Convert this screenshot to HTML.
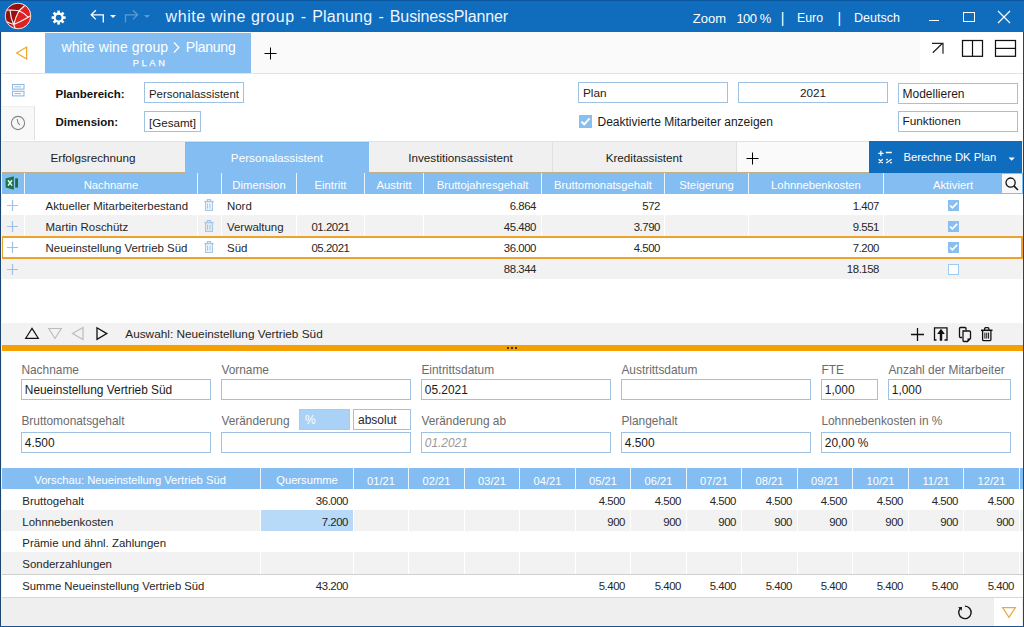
<!DOCTYPE html>
<html><head><meta charset="utf-8"><style>
*{margin:0;padding:0;box-sizing:border-box}
html,body{width:1024px;height:627px;overflow:hidden}
body{position:relative;font-family:"Liberation Sans",sans-serif;font-size:12px;color:#1b1b1b;background:#fff}
.a{position:absolute}
.t{position:absolute;white-space:nowrap}
</style></head><body>
<div class="a" style="left:0px;top:0px;width:1024px;height:32px;background:#106cbd"></div>
<div class="a" style="left:0px;top:0px;width:1024px;height:1px;background:#0a57a0"></div>
<svg class="a" style="left:4px;top:2px;" width="28" height="28" viewBox="0 0 28 28">
<defs><clipPath id="cc"><circle cx="14" cy="14" r="12.6"/></clipPath></defs>
<circle cx="14" cy="14" r="13" fill="#f3c9c9"/>
<g clip-path="url(#cc)">
<rect x="0" y="0" width="28" height="28" fill="#dd2222"/>
<path d="M0 0 H24 L22 2 Q18.5 6 15 8.7 Q11.5 15 9.8 22.5 L0 26 Z" fill="#961010"/>
<path d="M0.5 8.8 Q3 7.8 6 8 Q10 8.2 15 8.7 Q18.5 6 22 2 M6 8 Q6.5 16 9.8 22.5 Q11.5 15 15 8.7 Q20.5 11 24.3 15.3 Q17 19.5 9.8 22.5 Q6 21.5 2.5 19.5 M24.3 15.3 L27.5 13 M9.8 22.5 L11.5 27.5" stroke="#fff" stroke-width="1.15" fill="none" stroke-linejoin="round" opacity="0.95"/>
</g>
<circle cx="14" cy="14" r="12.8" stroke="#f6dede" stroke-width="0.9" fill="none"/>
</svg>
<svg class="a" style="left:50px;top:10px;" width="17" height="16" viewBox="0 0 17 16"><g transform="translate(8.6,7.6)" fill="#fff"><circle r="5"/><rect x="-1.3" y="-7" width="2.6" height="3" transform="rotate(0)"/><rect x="-1.3" y="-7" width="2.6" height="3" transform="rotate(45)"/><rect x="-1.3" y="-7" width="2.6" height="3" transform="rotate(90)"/><rect x="-1.3" y="-7" width="2.6" height="3" transform="rotate(135)"/><rect x="-1.3" y="-7" width="2.6" height="3" transform="rotate(180)"/><rect x="-1.3" y="-7" width="2.6" height="3" transform="rotate(225)"/><rect x="-1.3" y="-7" width="2.6" height="3" transform="rotate(270)"/><rect x="-1.3" y="-7" width="2.6" height="3" transform="rotate(315)"/><circle r="2.9" fill="#106cbd"/></g></svg>
<svg class="a" style="left:88px;top:8px;" width="64" height="18" viewBox="0 0 64 18">
<path d="M3.5 6.8 H15.3 V14.5 M7.8 2.2 L3.2 6.8 L7.8 11.4" stroke="#fff" stroke-width="1.3" fill="none"/>
<path d="M22 7 H28 L25 10 Z" fill="#fff"/>
<path d="M37.5 14.5 V6.8 H49.3 M45 2.2 L49.6 6.8 L45 11.4" stroke="#5d9ad6" stroke-width="1.3" fill="none"/>
<path d="M56 7 H62 L59 10 Z" fill="#5d9ad6"/>
</svg>
<div class="t" style="left:165.6px;top:9.46px;font-size:16px;line-height:16px;color:#eef6ff;text-align:left;letter-spacing:0.56px">white wine group</div>
<div class="t" style="left:300.8px;top:9.46px;font-size:16px;line-height:16px;color:#eef6ff;text-align:left;">-</div>
<div class="t" style="left:312.2px;top:9.46px;font-size:16px;line-height:16px;color:#eef6ff;text-align:left;letter-spacing:0.19px">Planung</div>
<div class="t" style="left:378.4px;top:9.46px;font-size:16px;line-height:16px;color:#eef6ff;text-align:left;">-</div>
<div class="t" style="left:389.8px;top:9.46px;font-size:16px;line-height:16px;color:#eef6ff;text-align:left;letter-spacing:-0.12px">BusinessPlanner</div>
<div class="t" style="left:692.8px;top:11.60px;font-size:13px;line-height:13px;color:#fff;text-align:left;">Zoom</div>
<div class="t" style="left:736.4px;top:11.60px;font-size:13px;line-height:13px;color:#fff;text-align:left;letter-spacing:-0.5px">100 %</div>
<div class="t" style="left:780.8px;top:11.35px;font-size:14px;line-height:14px;color:#fff;text-align:left;">|</div>
<div class="t" style="left:797px;top:12.19px;font-size:12.3px;line-height:12.3px;color:#fff;text-align:left;">Euro</div>
<div class="t" style="left:837.5px;top:11.35px;font-size:14px;line-height:14px;color:#fff;text-align:left;">|</div>
<div class="t" style="left:854px;top:12.02px;font-size:12.5px;line-height:12.5px;color:#fff;text-align:left;">Deutsch</div>
<div class="a" style="left:929px;top:19.5px;width:10px;height:1.2px;background:#fff"></div>
<div class="a" style="left:963px;top:11.5px;width:12px;height:10px;border:1.2px solid #fff"></div>
<svg class="a" style="left:997px;top:10px;" width="14" height="14" viewBox="0 0 14 14"><path d="M1 1 L13 13 M13 1 L1 13" stroke="#fff" stroke-width="1.2"/></svg>
<div class="a" style="left:1px;top:32px;width:1022px;height:41px;background:#fafafa"></div>
<div class="a" style="left:1px;top:32px;width:44px;height:41px;background:#fff"></div>
<div class="a" style="left:920px;top:32px;width:103px;height:41px;background:#fff"></div>
<div class="a" style="left:1px;top:73px;width:1022px;height:1px;background:#e3e3e3"></div>
<svg class="a" style="left:14px;top:45px;" width="16" height="16" viewBox="0 0 16 16"><path d="M2.6 8 L12.6 2 V14 Z" stroke="#eea52a" stroke-width="1.2" fill="none" stroke-linejoin="miter"/></svg>
<div class="a" style="left:45px;top:33px;width:206px;height:40px;background:#84bdf1"></div>
<div class="t" style="left:61.5px;top:40.15px;font-size:14px;line-height:14px;color:#fff;text-align:left;letter-spacing:0.1px">white wine group</div>
<svg class="a" style="left:172px;top:41px;" width="9" height="13" viewBox="0 0 9 13"><path d="M2 1.5 L6.8 6.5 L2 11.5" stroke="#fff" stroke-width="1.3" fill="none"/></svg>
<div class="t" style="left:185.8px;top:40.15px;font-size:14px;line-height:14px;color:#fff;text-align:left;letter-spacing:-0.25px">Planung</div>
<div class="t" style="left:132.8px;top:59.13px;font-size:9.3px;line-height:9.3px;color:#fafcff;text-align:left;letter-spacing:2.6px;-webkit-text-stroke:0.25px #fafcff">PLAN</div>
<svg class="a" style="left:264px;top:47px;" width="13" height="13" viewBox="0 0 13 13"><path d="M6.5 0.5 V12.5 M0.5 6.5 H12.5" stroke="#000" stroke-width="1"/></svg>
<svg class="a" style="left:930px;top:41px;" width="16" height="16" viewBox="0 0 16 16"><path d="M2 2.3 H13 V12.8 M2.8 11.8 L12 2.8" stroke="#222" stroke-width="1.2" fill="none"/></svg>
<svg class="a" style="left:961px;top:39px;" width="24" height="19" viewBox="0 0 24 19"><rect x="1.5" y="1.5" width="20" height="15.8" stroke="#111" stroke-width="1.25" fill="none"/><path d="M11.5 1.5 V17.3" stroke="#111" stroke-width="1.2"/></svg>
<svg class="a" style="left:994px;top:39px;" width="24" height="19" viewBox="0 0 24 19"><rect x="1.5" y="1.5" width="20" height="15.8" stroke="#111" stroke-width="1.25" fill="none"/><path d="M1.5 9.4 H21.5" stroke="#111" stroke-width="1.2"/></svg>
<div class="a" style="left:1px;top:74px;width:1022px;height:67px;background:#fff"></div>
<svg class="a" style="left:11px;top:83px;" width="14" height="14" viewBox="0 0 14 14"><rect x="1.5" y="1.5" width="11.5" height="4.6" stroke="#93b9e0" stroke-width="1.1" fill="none"/><rect x="1.5" y="8.3" width="11.5" height="4.6" stroke="#93b9e0" stroke-width="1.1" fill="none"/><path d="M3.5 3.8 H10 M3.5 10.6 H10" stroke="#93b9e0" stroke-width="1"/></svg>
<div class="a" style="left:1px;top:106px;width:34px;height:34px;background:#f8f8f8;border-right:1px solid #e0e0e0;border-top:1px solid #efefef"></div>
<svg class="a" style="left:10px;top:115px;" width="16" height="16" viewBox="0 0 16 16"><circle cx="8" cy="8" r="6.6" stroke="#858585" stroke-width="1.1" fill="none"/><path d="M7.2 4 L8 7.8 L9.8 9.8" stroke="#858585" stroke-width="1.1" fill="none"/></svg>
<div class="t" style="left:55.5px;top:88.87px;font-size:11.5px;line-height:11.5px;color:#111;text-align:left;font-weight:bold">Planbereich:</div>
<div class="t" style="left:55.5px;top:116.77px;font-size:11.5px;line-height:11.5px;color:#111;text-align:left;font-weight:bold">Dimension:</div>
<div class="a" style="left:144px;top:82px;width:100px;height:21px;background:#fff;border:1px solid #9fc1e2"></div>
<div class="t" style="left:149px;top:88.65px;font-size:11.4px;line-height:11.4px;color:#1b1b1b;text-align:left;">Personalassistent</div>
<div class="a" style="left:144px;top:111px;width:57px;height:21px;background:#fff;border:1px solid #9fc1e2"></div>
<div class="t" style="left:149px;top:116.88px;font-size:11.6px;line-height:11.6px;color:#1b1b1b;text-align:left;">[Gesamt]</div>
<div class="a" style="left:578px;top:82px;width:150px;height:21px;background:#fff;border:1px solid #9fc1e2"></div>
<div class="t" style="left:583px;top:88.31px;font-size:11.8px;line-height:11.8px;color:#1b1b1b;text-align:left;">Plan</div>
<div class="a" style="left:738px;top:82px;width:150px;height:21px;background:#fff;border:1px solid #9fc1e2"></div>
<div class="t" style="left:738px;top:88.31px;font-size:11.8px;line-height:11.8px;color:#1b1b1b;text-align:center;width:150px;">2021</div>
<div class="a" style="left:898px;top:83px;width:120px;height:21px;background:#fff;border:1px solid #9fc1e2"></div>
<div class="t" style="left:902.5px;top:87.94px;font-size:12px;line-height:12px;color:#1b1b1b;text-align:left;">Modellieren</div>
<div class="a" style="left:898px;top:111px;width:120px;height:21px;background:#fff;border:1px solid #9fc1e2"></div>
<div class="t" style="left:902.5px;top:115.91px;font-size:11.8px;line-height:11.8px;color:#1b1b1b;text-align:left;">Funktionen</div>
<div class="a" style="left:579px;top:115px;width:13px;height:13px;background:#88bef0"></div>
<svg class="a" style="left:579px;top:115px;" width="13" height="13" viewBox="0 0 13 13"><path d="M2.4 6.6 L5.2 9.3 L10.6 3.4" stroke="#fff" stroke-width="1.9" fill="none"/></svg>
<div class="t" style="left:597.5px;top:115.84px;font-size:12px;line-height:12px;color:#1b1b1b;text-align:left;">Deaktivierte Mitarbeiter anzeigen</div>
<div class="a" style="left:1px;top:141px;width:1022px;height:32px;background:#f0f0f0"></div>
<div class="a" style="left:1px;top:141px;width:1022px;height:1px;background:#e2e2e2"></div>
<div class="t" style="left:1px;top:152.10px;font-size:11.7px;line-height:11.7px;color:#1b1b1b;text-align:center;width:184px;">Erfolgsrechnung</div>
<div class="a" style="left:185px;top:142px;width:184px;height:31px;background:#84bdf1;border-top:1px solid #7bb5e8"></div>
<div class="t" style="left:185px;top:152.10px;font-size:11.7px;line-height:11.7px;color:#fff;text-align:center;width:184px;">Personalassistent</div>
<div class="t" style="left:369px;top:152.10px;font-size:11.7px;line-height:11.7px;color:#1b1b1b;text-align:center;width:183px;">Investitionsassistent</div>
<div class="t" style="left:552px;top:152.10px;font-size:11.7px;line-height:11.7px;color:#1b1b1b;text-align:center;width:184px;">Kreditassistent</div>
<div class="a" style="left:552px;top:142px;width:1px;height:30px;background:#e0e0e0"></div>
<div class="a" style="left:736px;top:141px;width:133px;height:31px;background:#fafafa;border-top:1px solid #e2e2e2;border-left:1px solid #e0e0e0"></div>
<svg class="a" style="left:746px;top:152px;" width="13" height="13" viewBox="0 0 13 13"><path d="M6.5 0.5 V12.5 M0.5 6.5 H12.5" stroke="#000" stroke-width="1"/></svg>
<div class="a" style="left:1px;top:172px;width:184px;height:1px;background:#c4b080"></div>
<div class="a" style="left:369px;top:172px;width:500px;height:1px;background:#c4b080"></div>
<div class="a" style="left:869px;top:141px;width:153px;height:32px;background:#106cbd"></div>
<svg class="a" style="left:876px;top:148px;" width="18" height="18" viewBox="0 0 18 18"><path d="M2.3 5.4 H7.5 M4.9 2.8 V8 M9.8 4.5 H15.8 M2.7 11.3 L6.7 14.9 M6.7 11.3 L2.7 14.9 M10.2 15 L15.6 11.2" stroke="#fff" stroke-width="1.3"/><circle cx="11" cy="11.6" r="0.9" fill="#fff"/><circle cx="15" cy="14.6" r="0.9" fill="#fff"/></svg>
<div class="t" style="left:903.4px;top:152.23px;font-size:11.3px;line-height:11.3px;color:#fff;text-align:left;">Berechne DK Plan</div>
<svg class="a" style="left:1008px;top:157px;" width="8" height="5" viewBox="0 0 8 5"><path d="M0.6 0.6 H6.8 L3.7 3.7 Z" fill="#fff"/></svg>
<div class="a" style="left:1px;top:173px;width:1022px;height:21px;background:#84bdf1"></div>
<div class="a" style="left:1px;top:173px;width:1px;height:21px;background:#fff"></div>
<div class="a" style="left:24px;top:173px;width:1px;height:21px;background:#eaf3fb"></div>
<div class="a" style="left:197px;top:173px;width:1px;height:21px;background:#eaf3fb"></div>
<div class="a" style="left:221px;top:173px;width:1px;height:21px;background:#eaf3fb"></div>
<div class="a" style="left:296px;top:173px;width:1px;height:21px;background:#eaf3fb"></div>
<div class="a" style="left:364px;top:173px;width:1px;height:21px;background:#eaf3fb"></div>
<div class="a" style="left:423px;top:173px;width:1px;height:21px;background:#eaf3fb"></div>
<div class="a" style="left:541px;top:173px;width:1px;height:21px;background:#eaf3fb"></div>
<div class="a" style="left:664px;top:173px;width:1px;height:21px;background:#eaf3fb"></div>
<div class="a" style="left:748px;top:173px;width:1px;height:21px;background:#eaf3fb"></div>
<div class="a" style="left:883px;top:173px;width:1px;height:21px;background:#eaf3fb"></div>
<div class="a" style="left:1002px;top:174px;width:20px;height:19px;background:#f8f8f8"></div>
<svg class="a" style="left:1003px;top:175px;" width="18" height="18" viewBox="0 0 18 18"><circle cx="7.6" cy="7.6" r="4.6" stroke="#111" stroke-width="1.3" fill="none"/><path d="M10.9 10.9 L15 15" stroke="#111" stroke-width="1.5"/></svg>
<svg class="a" style="left:4px;top:175px;" width="16" height="16" viewBox="0 0 16 16"><rect x="11.2" y="3.3" width="2.8" height="9.3" fill="#1d6b40"/><path d="M1.6 3.4 L9.8 1.2 V14.7 L1.6 12.5 Z" fill="#1a7443"/><path d="M4 5.2 L8 10.6 M8 5.2 L4 10.6" stroke="#e8f5ec" stroke-width="1.5"/></svg>
<div class="t" style="left:25px;top:180.03px;font-size:11.3px;line-height:11.3px;color:#fff;text-align:center;width:172px;">Nachname</div>
<div class="t" style="left:222px;top:180.03px;font-size:11.3px;line-height:11.3px;color:#fff;text-align:center;width:74px;">Dimension</div>
<div class="t" style="left:297px;top:180.03px;font-size:11.3px;line-height:11.3px;color:#fff;text-align:center;width:67px;">Eintritt</div>
<div class="t" style="left:365px;top:180.03px;font-size:11.3px;line-height:11.3px;color:#fff;text-align:center;width:58px;">Austritt</div>
<div class="t" style="left:424px;top:180.03px;font-size:11.3px;line-height:11.3px;color:#fff;text-align:center;width:117px;">Bruttojahresgehalt</div>
<div class="t" style="left:542px;top:180.03px;font-size:11.3px;line-height:11.3px;color:#fff;text-align:center;width:122px;">Bruttomonatsgehalt</div>
<div class="t" style="left:665px;top:180.03px;font-size:11.3px;line-height:11.3px;color:#fff;text-align:center;width:83px;">Steigerung</div>
<div class="t" style="left:749px;top:180.03px;font-size:11.3px;line-height:11.3px;color:#fff;text-align:center;width:134px;">Lohnnebenkosten</div>
<div class="t" style="left:884px;top:180.03px;font-size:11.3px;line-height:11.3px;color:#fff;text-align:center;width:138px;">Aktiviert</div>
<div class="a" style="left:1px;top:194px;width:1022px;height:21px;background:#fff"></div>
<svg class="a" style="left:7px;top:199.5px;" width="12" height="12" viewBox="0 0 12 12"><path d="M5.5 0 V11 M0 5.5 H11" stroke="#a0c2e6" stroke-width="1.2"/></svg>
<div class="t" style="left:45.6px;top:200.91px;font-size:11.45px;line-height:11.45px;color:#262626;text-align:left;">Aktueller Mitarbeiterbestand</div>
<svg class="a" style="left:203px;top:198px;" width="13" height="14" viewBox="0 0 13 14"><path d="M1.3 3.6 H10.7" stroke="#a6c7e9" stroke-width="1.5"/><path d="M4.4 3.2 V1.6 H7.6 V3.2 M2.6 4 V12.4 H9.4 V4 M4.6 5.6 V10.8 M7 5.6 V10.8" stroke="#a6c7e9" stroke-width="1.2" fill="none"/></svg>
<div class="t" style="left:227px;top:200.91px;font-size:11.45px;line-height:11.45px;color:#262626;text-align:left;">Nord</div>
<div class="t" style="left:297px;top:200.95px;font-size:11.4px;line-height:11.4px;color:#262626;text-align:center;width:67px;letter-spacing:-0.45px"></div>
<div class="t" style="left:424px;top:200.95px;font-size:11.4px;line-height:11.4px;color:#262626;text-align:right;width:112px;letter-spacing:-0.45px">6.864</div>
<div class="t" style="left:542px;top:200.95px;font-size:11.4px;line-height:11.4px;color:#262626;text-align:right;width:118px;letter-spacing:-0.45px">572</div>
<div class="t" style="left:749px;top:200.95px;font-size:11.4px;line-height:11.4px;color:#262626;text-align:right;width:130px;letter-spacing:-0.45px">1.407</div>
<div class="a" style="left:948px;top:200px;width:11px;height:11px;background:#88bef0"></div>
<svg class="a" style="left:948px;top:200px;" width="11" height="11" viewBox="0 0 11 11"><path d="M2 5.5 L4.4 7.9 L9.2 2.8" stroke="#fff" stroke-width="1.7" fill="none"/></svg>
<div class="a" style="left:1px;top:215px;width:1022px;height:21px;background:#f2f2f2"></div>
<div class="a" style="left:24px;top:215px;width:1px;height:21px;background:#fff"></div>
<div class="a" style="left:197px;top:215px;width:1px;height:21px;background:#fff"></div>
<div class="a" style="left:221px;top:215px;width:1px;height:21px;background:#fff"></div>
<div class="a" style="left:296px;top:215px;width:1px;height:21px;background:#fff"></div>
<div class="a" style="left:364px;top:215px;width:1px;height:21px;background:#fff"></div>
<div class="a" style="left:423px;top:215px;width:1px;height:21px;background:#fff"></div>
<div class="a" style="left:541px;top:215px;width:1px;height:21px;background:#fff"></div>
<div class="a" style="left:664px;top:215px;width:1px;height:21px;background:#fff"></div>
<div class="a" style="left:748px;top:215px;width:1px;height:21px;background:#fff"></div>
<div class="a" style="left:883px;top:215px;width:1px;height:21px;background:#fff"></div>
<svg class="a" style="left:7px;top:220.5px;" width="12" height="12" viewBox="0 0 12 12"><path d="M5.5 0 V11 M0 5.5 H11" stroke="#a0c2e6" stroke-width="1.2"/></svg>
<div class="t" style="left:45.6px;top:221.91px;font-size:11.45px;line-height:11.45px;color:#262626;text-align:left;">Martin Roschütz</div>
<svg class="a" style="left:203px;top:219px;" width="13" height="14" viewBox="0 0 13 14"><path d="M1.3 3.6 H10.7" stroke="#a6c7e9" stroke-width="1.5"/><path d="M4.4 3.2 V1.6 H7.6 V3.2 M2.6 4 V12.4 H9.4 V4 M4.6 5.6 V10.8 M7 5.6 V10.8" stroke="#a6c7e9" stroke-width="1.2" fill="none"/></svg>
<div class="t" style="left:227px;top:221.91px;font-size:11.45px;line-height:11.45px;color:#262626;text-align:left;">Verwaltung</div>
<div class="t" style="left:297px;top:221.95px;font-size:11.4px;line-height:11.4px;color:#262626;text-align:center;width:67px;letter-spacing:-0.45px">01.2021</div>
<div class="t" style="left:424px;top:221.95px;font-size:11.4px;line-height:11.4px;color:#262626;text-align:right;width:112px;letter-spacing:-0.45px">45.480</div>
<div class="t" style="left:542px;top:221.95px;font-size:11.4px;line-height:11.4px;color:#262626;text-align:right;width:118px;letter-spacing:-0.45px">3.790</div>
<div class="t" style="left:749px;top:221.95px;font-size:11.4px;line-height:11.4px;color:#262626;text-align:right;width:130px;letter-spacing:-0.45px">9.551</div>
<div class="a" style="left:948px;top:221px;width:11px;height:11px;background:#88bef0"></div>
<svg class="a" style="left:948px;top:221px;" width="11" height="11" viewBox="0 0 11 11"><path d="M2 5.5 L4.4 7.9 L9.2 2.8" stroke="#fff" stroke-width="1.7" fill="none"/></svg>
<div class="a" style="left:1px;top:236px;width:1022px;height:23px;background:#fff"></div>
<svg class="a" style="left:7px;top:241.5px;" width="12" height="12" viewBox="0 0 12 12"><path d="M5.5 0 V11 M0 5.5 H11" stroke="#a0c2e6" stroke-width="1.2"/></svg>
<div class="t" style="left:45.6px;top:242.91px;font-size:11.45px;line-height:11.45px;color:#262626;text-align:left;">Neueinstellung Vertrieb Süd</div>
<svg class="a" style="left:203px;top:240px;" width="13" height="14" viewBox="0 0 13 14"><path d="M1.3 3.6 H10.7" stroke="#a6c7e9" stroke-width="1.5"/><path d="M4.4 3.2 V1.6 H7.6 V3.2 M2.6 4 V12.4 H9.4 V4 M4.6 5.6 V10.8 M7 5.6 V10.8" stroke="#a6c7e9" stroke-width="1.2" fill="none"/></svg>
<div class="t" style="left:227px;top:242.91px;font-size:11.45px;line-height:11.45px;color:#262626;text-align:left;">Süd</div>
<div class="t" style="left:297px;top:242.95px;font-size:11.4px;line-height:11.4px;color:#262626;text-align:center;width:67px;letter-spacing:-0.45px">05.2021</div>
<div class="t" style="left:424px;top:242.95px;font-size:11.4px;line-height:11.4px;color:#262626;text-align:right;width:112px;letter-spacing:-0.45px">36.000</div>
<div class="t" style="left:542px;top:242.95px;font-size:11.4px;line-height:11.4px;color:#262626;text-align:right;width:118px;letter-spacing:-0.45px">4.500</div>
<div class="t" style="left:749px;top:242.95px;font-size:11.4px;line-height:11.4px;color:#262626;text-align:right;width:130px;letter-spacing:-0.45px">7.200</div>
<div class="a" style="left:948px;top:242px;width:11px;height:11px;background:#88bef0"></div>
<svg class="a" style="left:948px;top:242px;" width="11" height="11" viewBox="0 0 11 11"><path d="M2 5.5 L4.4 7.9 L9.2 2.8" stroke="#fff" stroke-width="1.7" fill="none"/></svg>
<div class="a" style="left:1px;top:259px;width:1022px;height:20px;background:#f2f2f2"></div>
<svg class="a" style="left:7px;top:263.5px;" width="12" height="12" viewBox="0 0 12 12"><path d="M5.5 0 V11 M0 5.5 H11" stroke="#a0c2e6" stroke-width="1.2"/></svg>
<div class="t" style="left:227px;top:264.21px;font-size:11.45px;line-height:11.45px;color:#262626;text-align:left;"></div>
<div class="t" style="left:297px;top:264.25px;font-size:11.4px;line-height:11.4px;color:#262626;text-align:center;width:67px;letter-spacing:-0.45px"></div>
<div class="t" style="left:424px;top:264.25px;font-size:11.4px;line-height:11.4px;color:#262626;text-align:right;width:112px;letter-spacing:-0.45px">88.344</div>
<div class="t" style="left:542px;top:264.25px;font-size:11.4px;line-height:11.4px;color:#262626;text-align:right;width:118px;letter-spacing:-0.45px"></div>
<div class="t" style="left:749px;top:264.25px;font-size:11.4px;line-height:11.4px;color:#262626;text-align:right;width:130px;letter-spacing:-0.45px">18.158</div>
<div class="a" style="left:948px;top:264px;width:11px;height:11px;background:#fff;border:1px solid #9ccaf2"></div>
<div class="a" style="left:1px;top:236px;width:1022px;height:23px;border:2px solid #eda22c"></div>
<div class="a" style="left:1px;top:279px;width:1022px;height:44px;background:#fff"></div>
<div class="a" style="left:1px;top:323px;width:1022px;height:22px;background:#f2f2f2"></div>
<svg class="a" style="left:24px;top:326px;" width="16" height="14" viewBox="0 0 16 14"><path d="M8 2.4 L14.3 12.3 H1.7 Z" stroke="#111" stroke-width="1.2" fill="none" stroke-linejoin="miter"/></svg>
<svg class="a" style="left:47px;top:327px;" width="16" height="14" viewBox="0 0 16 14"><path d="M8 11.5 L14.3 1.5 H1.7 Z" stroke="#bbb" stroke-width="1.1" fill="none"/></svg>
<svg class="a" style="left:71px;top:326px;" width="14" height="16" viewBox="0 0 14 16"><path d="M1.5 7.5 L12 1.5 V13.5 Z" stroke="#bbb" stroke-width="1.2" fill="none"/></svg>
<svg class="a" style="left:95px;top:326px;" width="14" height="16" viewBox="0 0 14 16"><path d="M11.8 7.6 L2 1.8 V13.4 Z" stroke="#111" stroke-width="1.3" fill="none"/></svg>
<div class="t" style="left:125.3px;top:328.81px;font-size:11.8px;line-height:11.8px;color:#262626;text-align:left;">Auswahl: Neueinstellung Vertrieb Süd</div>
<svg class="a" style="left:910px;top:327px;" width="15" height="15" viewBox="0 0 15 15"><path d="M7.5 1 V14 M1 7.5 H14" stroke="#111" stroke-width="1.3"/></svg>
<svg class="a" style="left:933px;top:326px;" width="16" height="16" viewBox="0 0 16 16"><path d="M3.5 1.8 H1.5 V14 H3.5 M11.5 1.8 H14 V14 H11.5 M3.5 1.8 H11.5" stroke="#111" stroke-width="1.3" fill="none"/><path d="M8 2.8 L11.8 8 H9.2 V14.8 H6.8 V8 H4.2 Z" fill="#111"/></svg>
<svg class="a" style="left:958px;top:326px;" width="14" height="17" viewBox="0 0 14 17"><path d="M4 11.5 H2.5 Q1.5 11.5 1.5 10.5 V2.5 Q1.5 1.5 2.5 1.5 H7 Q8 1.5 8 2.5 V4.5" stroke="#111" stroke-width="1.3" fill="none"/><path d="M5 5 H11.5 Q12.5 5 12.5 6 V12.5 L9.5 15.5 H6 Q5 15.5 5 14.5 Z" stroke="#111" stroke-width="1.3" fill="none"/><path d="M12.5 12.5 L9.5 15.5 V12.5 Z" fill="#111"/></svg>
<svg class="a" style="left:980px;top:326px;" width="14" height="16" viewBox="0 0 14 16"><path d="M1 4.3 H12.5" stroke="#111" stroke-width="1.5"/><path d="M4.6 4 V2.8 Q4.6 1.6 5.8 1.6 H7.7 Q8.9 1.6 8.9 2.8 V4 M2.6 4.6 V13.4 Q2.6 14.6 3.8 14.6 H9.7 Q10.9 14.6 10.9 13.4 V4.6" stroke="#111" stroke-width="1.3" fill="none"/><path d="M4.9 6.6 V12.6 M6.75 6.6 V12.6 M8.6 6.6 V12.6" stroke="#111" stroke-width="1"/></svg>
<div class="a" style="left:1px;top:345px;width:1022px;height:6px;background:#f5a000"></div>
<div class="a" style="left:507px;top:347px;width:2px;height:2px;background:#333"></div>
<div class="a" style="left:511px;top:347px;width:2px;height:2px;background:#333"></div>
<div class="a" style="left:515px;top:347px;width:2px;height:2px;background:#333"></div>
<div class="a" style="left:1px;top:351px;width:1022px;height:117px;background:#fff"></div>
<div class="t" style="left:21.4px;top:364.93px;font-size:11.9px;line-height:11.9px;color:#6b6b6b;text-align:left;">Nachname</div>
<div class="a" style="left:21px;top:379px;width:190px;height:21px;background:#fff;border:1px solid #9fc1e2"></div>
<div class="t" style="left:24.8px;top:385.43px;font-size:11.9px;line-height:11.9px;color:#1b1b1b;text-align:left;">Neueinstellung Vertrieb Süd</div>
<div class="t" style="left:221.4px;top:364.93px;font-size:11.9px;line-height:11.9px;color:#6b6b6b;text-align:left;">Vorname</div>
<div class="a" style="left:221px;top:379px;width:190px;height:21px;background:#fff;border:1px solid #9fc1e2"></div>
<div class="t" style="left:421.4px;top:364.93px;font-size:11.9px;line-height:11.9px;color:#6b6b6b;text-align:left;">Eintrittsdatum</div>
<div class="a" style="left:421px;top:379px;width:190px;height:21px;background:#fff;border:1px solid #9fc1e2"></div>
<div class="t" style="left:424.8px;top:385.43px;font-size:11.9px;line-height:11.9px;color:#1b1b1b;text-align:left;">05.2021</div>
<div class="t" style="left:621.4px;top:364.93px;font-size:11.9px;line-height:11.9px;color:#6b6b6b;text-align:left;">Austrittsdatum</div>
<div class="a" style="left:621px;top:379px;width:190px;height:21px;background:#fff;border:1px solid #9fc1e2"></div>
<div class="t" style="left:821.4px;top:364.93px;font-size:11.9px;line-height:11.9px;color:#6b6b6b;text-align:left;">FTE</div>
<div class="a" style="left:821px;top:379px;width:57px;height:21px;background:#fff;border:1px solid #9fc1e2"></div>
<div class="t" style="left:824.8px;top:385.43px;font-size:11.9px;line-height:11.9px;color:#1b1b1b;text-align:left;">1,000</div>
<div class="t" style="left:888.4px;top:364.93px;font-size:11.9px;line-height:11.9px;color:#6b6b6b;text-align:left;">Anzahl der Mitarbeiter</div>
<div class="a" style="left:888px;top:379px;width:123px;height:21px;background:#fff;border:1px solid #9fc1e2"></div>
<div class="t" style="left:891.8px;top:385.43px;font-size:11.9px;line-height:11.9px;color:#1b1b1b;text-align:left;">1,000</div>
<div class="t" style="left:21.4px;top:415.93px;font-size:11.9px;line-height:11.9px;color:#6b6b6b;text-align:left;">Bruttomonatsgehalt</div>
<div class="a" style="left:21px;top:432px;width:190px;height:21px;background:#fff;border:1px solid #9fc1e2"></div>
<div class="t" style="left:24.8px;top:438.43px;font-size:11.9px;line-height:11.9px;color:#1b1b1b;text-align:left;">4.500</div>
<div class="t" style="left:221.4px;top:415.93px;font-size:11.9px;line-height:11.9px;color:#6b6b6b;text-align:left;">Veränderung</div>
<div class="a" style="left:221px;top:432px;width:190px;height:21px;background:#fff;border:1px solid #9fc1e2"></div>
<div class="t" style="left:421.4px;top:415.93px;font-size:11.9px;line-height:11.9px;color:#6b6b6b;text-align:left;">Veränderung ab</div>
<div class="a" style="left:421px;top:432px;width:190px;height:21px;background:#fff;border:1px solid #9fc1e2"></div>
<div class="t" style="left:424.8px;top:438.43px;font-size:11.9px;line-height:11.9px;color:#9a9a9a;text-align:left;font-style:italic">01.2021</div>
<div class="t" style="left:621.4px;top:415.93px;font-size:11.9px;line-height:11.9px;color:#6b6b6b;text-align:left;">Plangehalt</div>
<div class="a" style="left:621px;top:432px;width:190px;height:21px;background:#fff;border:1px solid #9fc1e2"></div>
<div class="t" style="left:624.8px;top:438.43px;font-size:11.9px;line-height:11.9px;color:#1b1b1b;text-align:left;">4.500</div>
<div class="t" style="left:821.4px;top:415.93px;font-size:11.9px;line-height:11.9px;color:#6b6b6b;text-align:left;">Lohnnebenkosten in %</div>
<div class="a" style="left:821px;top:432px;width:190px;height:21px;background:#fff;border:1px solid #9fc1e2"></div>
<div class="t" style="left:824.8px;top:438.43px;font-size:11.9px;line-height:11.9px;color:#1b1b1b;text-align:left;">20,00 %</div>
<div class="a" style="left:299px;top:409px;width:51px;height:21px;background:#a9d2f6;border:1px solid #a3cdf0"></div>
<div class="t" style="left:305px;top:414.34px;font-size:12px;line-height:12px;color:#fff;text-align:left;">%</div>
<div class="a" style="left:353px;top:409px;width:58px;height:21px;background:#fff;border:1px solid #9fc1e2"></div>
<div class="t" style="left:358px;top:414.34px;font-size:12px;line-height:12px;color:#262626;text-align:left;">absolut</div>
<div class="a" style="left:1px;top:468px;width:1022px;height:21px;background:#84bdf1"></div>
<div class="a" style="left:260px;top:468px;width:1px;height:21px;background:#eaf3fb"></div>
<div class="a" style="left:353px;top:468px;width:1px;height:21px;background:#eaf3fb"></div>
<div class="a" style="left:408px;top:468px;width:1px;height:21px;background:#eaf3fb"></div>
<div class="a" style="left:464px;top:468px;width:1px;height:21px;background:#eaf3fb"></div>
<div class="a" style="left:519px;top:468px;width:1px;height:21px;background:#eaf3fb"></div>
<div class="a" style="left:575px;top:468px;width:1px;height:21px;background:#eaf3fb"></div>
<div class="a" style="left:630px;top:468px;width:1px;height:21px;background:#eaf3fb"></div>
<div class="a" style="left:686px;top:468px;width:1px;height:21px;background:#eaf3fb"></div>
<div class="a" style="left:741px;top:468px;width:1px;height:21px;background:#eaf3fb"></div>
<div class="a" style="left:797px;top:468px;width:1px;height:21px;background:#eaf3fb"></div>
<div class="a" style="left:852px;top:468px;width:1px;height:21px;background:#eaf3fb"></div>
<div class="a" style="left:908px;top:468px;width:1px;height:21px;background:#eaf3fb"></div>
<div class="a" style="left:963px;top:468px;width:1px;height:21px;background:#eaf3fb"></div>
<div class="a" style="left:1019px;top:468px;width:1px;height:21px;background:#eaf3fb"></div>
<div class="t" style="left:34.3px;top:475.12px;font-size:11.2px;line-height:11.2px;color:#fff;text-align:left;">Vorschau: Neueinstellung Vertrieb Süd</div>
<div class="t" style="left:261px;top:475.12px;font-size:11.2px;line-height:11.2px;color:#fff;text-align:center;width:92px;">Quersumme</div>
<div class="t" style="left:354px;top:475.60px;font-size:11.1px;line-height:11.1px;color:#fff;text-align:center;width:54px;">01/21</div>
<div class="t" style="left:409px;top:475.60px;font-size:11.1px;line-height:11.1px;color:#fff;text-align:center;width:55px;">02/21</div>
<div class="t" style="left:465px;top:475.60px;font-size:11.1px;line-height:11.1px;color:#fff;text-align:center;width:54px;">03/21</div>
<div class="t" style="left:520px;top:475.60px;font-size:11.1px;line-height:11.1px;color:#fff;text-align:center;width:55px;">04/21</div>
<div class="t" style="left:576px;top:475.60px;font-size:11.1px;line-height:11.1px;color:#fff;text-align:center;width:54px;">05/21</div>
<div class="t" style="left:631px;top:475.60px;font-size:11.1px;line-height:11.1px;color:#fff;text-align:center;width:55px;">06/21</div>
<div class="t" style="left:687px;top:475.60px;font-size:11.1px;line-height:11.1px;color:#fff;text-align:center;width:54px;">07/21</div>
<div class="t" style="left:742px;top:475.60px;font-size:11.1px;line-height:11.1px;color:#fff;text-align:center;width:55px;">08/21</div>
<div class="t" style="left:798px;top:475.60px;font-size:11.1px;line-height:11.1px;color:#fff;text-align:center;width:54px;">09/21</div>
<div class="t" style="left:853px;top:475.60px;font-size:11.1px;line-height:11.1px;color:#fff;text-align:center;width:55px;">10/21</div>
<div class="t" style="left:909px;top:475.60px;font-size:11.1px;line-height:11.1px;color:#fff;text-align:center;width:54px;">11/21</div>
<div class="t" style="left:964px;top:475.60px;font-size:11.1px;line-height:11.1px;color:#fff;text-align:center;width:55px;">12/21</div>
<div class="a" style="left:1px;top:489px;width:1022px;height:21px;background:#fff"></div>
<div class="t" style="left:22.3px;top:495.71px;font-size:11.45px;line-height:11.45px;color:#262626;text-align:left;">Bruttogehalt</div>
<div class="t" style="left:261px;top:495.75px;font-size:11.4px;line-height:11.4px;color:#262626;text-align:right;width:87px;letter-spacing:-0.45px">36.000</div>
<div class="t" style="left:576px;top:495.75px;font-size:11.4px;line-height:11.4px;color:#262626;text-align:right;width:49px;letter-spacing:-0.45px">4.500</div>
<div class="t" style="left:631px;top:495.75px;font-size:11.4px;line-height:11.4px;color:#262626;text-align:right;width:50px;letter-spacing:-0.45px">4.500</div>
<div class="t" style="left:687px;top:495.75px;font-size:11.4px;line-height:11.4px;color:#262626;text-align:right;width:49px;letter-spacing:-0.45px">4.500</div>
<div class="t" style="left:742px;top:495.75px;font-size:11.4px;line-height:11.4px;color:#262626;text-align:right;width:50px;letter-spacing:-0.45px">4.500</div>
<div class="t" style="left:798px;top:495.75px;font-size:11.4px;line-height:11.4px;color:#262626;text-align:right;width:49px;letter-spacing:-0.45px">4.500</div>
<div class="t" style="left:853px;top:495.75px;font-size:11.4px;line-height:11.4px;color:#262626;text-align:right;width:50px;letter-spacing:-0.45px">4.500</div>
<div class="t" style="left:909px;top:495.75px;font-size:11.4px;line-height:11.4px;color:#262626;text-align:right;width:49px;letter-spacing:-0.45px">4.500</div>
<div class="t" style="left:964px;top:495.75px;font-size:11.4px;line-height:11.4px;color:#262626;text-align:right;width:50px;letter-spacing:-0.45px">4.500</div>
<div class="a" style="left:1px;top:510px;width:1022px;height:21px;background:#f2f2f2"></div>
<div class="a" style="left:260px;top:510px;width:1px;height:21px;background:#fff"></div>
<div class="a" style="left:353px;top:510px;width:1px;height:21px;background:#fff"></div>
<div class="a" style="left:408px;top:510px;width:1px;height:21px;background:#fff"></div>
<div class="a" style="left:464px;top:510px;width:1px;height:21px;background:#fff"></div>
<div class="a" style="left:519px;top:510px;width:1px;height:21px;background:#fff"></div>
<div class="a" style="left:575px;top:510px;width:1px;height:21px;background:#fff"></div>
<div class="a" style="left:630px;top:510px;width:1px;height:21px;background:#fff"></div>
<div class="a" style="left:686px;top:510px;width:1px;height:21px;background:#fff"></div>
<div class="a" style="left:741px;top:510px;width:1px;height:21px;background:#fff"></div>
<div class="a" style="left:797px;top:510px;width:1px;height:21px;background:#fff"></div>
<div class="a" style="left:852px;top:510px;width:1px;height:21px;background:#fff"></div>
<div class="a" style="left:908px;top:510px;width:1px;height:21px;background:#fff"></div>
<div class="a" style="left:963px;top:510px;width:1px;height:21px;background:#fff"></div>
<div class="a" style="left:1019px;top:510px;width:1px;height:21px;background:#fff"></div>
<div class="t" style="left:22.3px;top:516.71px;font-size:11.45px;line-height:11.45px;color:#262626;text-align:left;">Lohnnebenkosten</div>
<div class="a" style="left:261px;top:510px;width:92px;height:21px;background:#b6daf7"></div>
<div class="t" style="left:261px;top:516.75px;font-size:11.4px;line-height:11.4px;color:#262626;text-align:right;width:87px;letter-spacing:-0.45px">7.200</div>
<div class="t" style="left:576px;top:516.75px;font-size:11.4px;line-height:11.4px;color:#262626;text-align:right;width:49px;letter-spacing:-0.45px">900</div>
<div class="t" style="left:631px;top:516.75px;font-size:11.4px;line-height:11.4px;color:#262626;text-align:right;width:50px;letter-spacing:-0.45px">900</div>
<div class="t" style="left:687px;top:516.75px;font-size:11.4px;line-height:11.4px;color:#262626;text-align:right;width:49px;letter-spacing:-0.45px">900</div>
<div class="t" style="left:742px;top:516.75px;font-size:11.4px;line-height:11.4px;color:#262626;text-align:right;width:50px;letter-spacing:-0.45px">900</div>
<div class="t" style="left:798px;top:516.75px;font-size:11.4px;line-height:11.4px;color:#262626;text-align:right;width:49px;letter-spacing:-0.45px">900</div>
<div class="t" style="left:853px;top:516.75px;font-size:11.4px;line-height:11.4px;color:#262626;text-align:right;width:50px;letter-spacing:-0.45px">900</div>
<div class="t" style="left:909px;top:516.75px;font-size:11.4px;line-height:11.4px;color:#262626;text-align:right;width:49px;letter-spacing:-0.45px">900</div>
<div class="t" style="left:964px;top:516.75px;font-size:11.4px;line-height:11.4px;color:#262626;text-align:right;width:50px;letter-spacing:-0.45px">900</div>
<div class="a" style="left:1px;top:531px;width:1022px;height:21px;background:#fff"></div>
<div class="t" style="left:22.3px;top:537.71px;font-size:11.45px;line-height:11.45px;color:#262626;text-align:left;">Prämie und ähnl. Zahlungen</div>
<div class="a" style="left:1px;top:552px;width:1022px;height:22px;background:#f2f2f2"></div>
<div class="a" style="left:260px;top:552px;width:1px;height:22px;background:#fff"></div>
<div class="a" style="left:353px;top:552px;width:1px;height:22px;background:#fff"></div>
<div class="a" style="left:408px;top:552px;width:1px;height:22px;background:#fff"></div>
<div class="a" style="left:464px;top:552px;width:1px;height:22px;background:#fff"></div>
<div class="a" style="left:519px;top:552px;width:1px;height:22px;background:#fff"></div>
<div class="a" style="left:575px;top:552px;width:1px;height:22px;background:#fff"></div>
<div class="a" style="left:630px;top:552px;width:1px;height:22px;background:#fff"></div>
<div class="a" style="left:686px;top:552px;width:1px;height:22px;background:#fff"></div>
<div class="a" style="left:741px;top:552px;width:1px;height:22px;background:#fff"></div>
<div class="a" style="left:797px;top:552px;width:1px;height:22px;background:#fff"></div>
<div class="a" style="left:852px;top:552px;width:1px;height:22px;background:#fff"></div>
<div class="a" style="left:908px;top:552px;width:1px;height:22px;background:#fff"></div>
<div class="a" style="left:963px;top:552px;width:1px;height:22px;background:#fff"></div>
<div class="a" style="left:1019px;top:552px;width:1px;height:22px;background:#fff"></div>
<div class="t" style="left:22.3px;top:558.71px;font-size:11.45px;line-height:11.45px;color:#262626;text-align:left;">Sonderzahlungen</div>
<div class="a" style="left:1px;top:574px;width:1022px;height:1px;background:#cfcfcf"></div>
<div class="a" style="left:1px;top:575px;width:1022px;height:22px;background:#fff"></div>
<div class="t" style="left:22.3px;top:581.43px;font-size:11.3px;line-height:11.3px;color:#262626;text-align:left;">Summe Neueinstellung Vertrieb Süd</div>
<div class="t" style="left:261px;top:581.35px;font-size:11.4px;line-height:11.4px;color:#262626;text-align:right;width:87px;letter-spacing:-0.45px">43.200</div>
<div class="t" style="left:576px;top:581.35px;font-size:11.4px;line-height:11.4px;color:#262626;text-align:right;width:49px;letter-spacing:-0.45px">5.400</div>
<div class="t" style="left:631px;top:581.35px;font-size:11.4px;line-height:11.4px;color:#262626;text-align:right;width:50px;letter-spacing:-0.45px">5.400</div>
<div class="t" style="left:687px;top:581.35px;font-size:11.4px;line-height:11.4px;color:#262626;text-align:right;width:49px;letter-spacing:-0.45px">5.400</div>
<div class="t" style="left:742px;top:581.35px;font-size:11.4px;line-height:11.4px;color:#262626;text-align:right;width:50px;letter-spacing:-0.45px">5.400</div>
<div class="t" style="left:798px;top:581.35px;font-size:11.4px;line-height:11.4px;color:#262626;text-align:right;width:49px;letter-spacing:-0.45px">5.400</div>
<div class="t" style="left:853px;top:581.35px;font-size:11.4px;line-height:11.4px;color:#262626;text-align:right;width:50px;letter-spacing:-0.45px">5.400</div>
<div class="t" style="left:909px;top:581.35px;font-size:11.4px;line-height:11.4px;color:#262626;text-align:right;width:49px;letter-spacing:-0.45px">5.400</div>
<div class="t" style="left:964px;top:581.35px;font-size:11.4px;line-height:11.4px;color:#262626;text-align:right;width:50px;letter-spacing:-0.45px">5.400</div>
<div class="a" style="left:1px;top:597px;width:1022px;height:1px;background:#d6d6d6"></div>
<div class="a" style="left:1px;top:598px;width:1022px;height:28px;background:#efefef"></div>
<div class="a" style="left:994px;top:598px;width:28px;height:28px;background:#fff"></div>
<svg class="a" style="left:954px;top:602px;" width="20" height="20" viewBox="0 0 20 20"><path d="M10.9 4.2 A6.2 6.2 0 1 1 6.2 6.4" stroke="#111" stroke-width="1.35" fill="none"/><path d="M4.1 5.3 L8 4.9 L7.7 8.7 Z" fill="#111"/></svg>
<svg class="a" style="left:1001px;top:606px;" width="16" height="13" viewBox="0 0 16 13"><path d="M1.6 1.6 H14.4 L8 11.4 Z" stroke="#eba83c" stroke-width="1.2" fill="none"/></svg>
<div class="a" style="left:0px;top:32px;width:1px;height:595px;background:#1a4570"></div>
<div class="a" style="left:1023px;top:32px;width:1px;height:595px;background:#1b4573"></div>
<div class="a" style="left:0px;top:626px;width:1024px;height:1px;background:#1a5490"></div>
<div class="a" style="left:1px;top:32px;width:1px;height:594px;background:#e6f6fd"></div>
</body></html>
